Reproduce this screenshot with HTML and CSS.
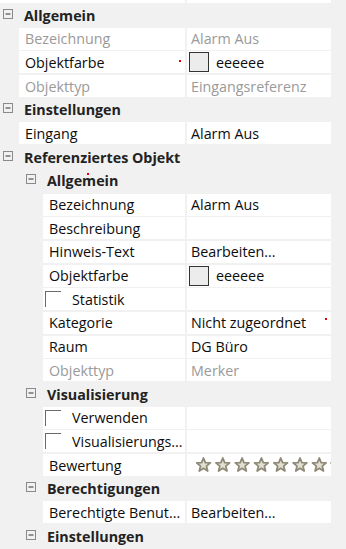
FILE: index.html
```html
<!DOCTYPE html>
<html lang="de">
<head>
<meta charset="utf-8">
<title>Eigenschaften</title>
<link rel="stylesheet" href="styles.css">
</head>
<body>
<div class="grid">
  <div class="stub"><div class="stub-l"></div><div class="stub-r"></div></div>

  <div class="row cat l0"><svg class="tog" width="10" height="10" viewBox="0 0 10 10"><rect x="0.5" y="0.5" width="9" height="9" fill="none" stroke="#8a8a8a"/><path d="M2.5 5h5" stroke="#333"/></svg><span class="cat-name">Allgemein</span></div>
  <div class="row prop l0"><div class="name dis">Bezeichnung</div><div class="val dis">Alarm Aus</div></div>
  <div class="row prop l0"><div class="name">Objektfarbe</div><div class="val swv"><span class="swatch"></span>eeeeee</div><span class="dot d1"></span></div>
  <div class="row prop l0"><div class="name dis">Objekttyp</div><div class="val dis">Eingangsreferenz</div></div>

  <div class="row cat l0"><svg class="tog" width="10" height="10" viewBox="0 0 10 10"><rect x="0.5" y="0.5" width="9" height="9" fill="none" stroke="#8a8a8a"/><path d="M2.5 5h5" stroke="#333"/></svg><span class="cat-name">Einstellungen</span></div>
  <div class="row prop l0"><div class="name">Eingang</div><div class="val">Alarm Aus</div></div>

  <div class="row cat l0"><svg class="tog" width="10" height="10" viewBox="0 0 10 10"><rect x="0.5" y="0.5" width="9" height="9" fill="none" stroke="#8a8a8a"/><path d="M2.5 5h5" stroke="#333"/></svg><span class="cat-name">Referenziertes Objekt</span></div>

  <div class="row cat l1"><svg class="tog" width="10" height="10" viewBox="0 0 10 10"><rect x="0.5" y="0.5" width="9" height="9" fill="none" stroke="#8a8a8a"/><path d="M2.5 5h5" stroke="#333"/></svg><span class="cat-name">Allgemein</span><span class="dot d2"></span></div>
  <div class="row prop l1"><div class="name">Bezeichnung</div><div class="val">Alarm Aus</div></div>
  <div class="row prop l1"><div class="name">Beschreibung</div><div class="val"></div></div>
  <div class="row prop l1"><div class="name">Hinweis-Text</div><div class="val">Bearbeiten...</div></div>
  <div class="row prop l1"><div class="name">Objektfarbe</div><div class="val swv"><span class="swatch"></span>eeeeee</div></div>
  <div class="row prop l1"><div class="name chk"><span class="box"></span>Statistik</div><div class="val"></div></div>
  <div class="row prop l1"><div class="name">Kategorie</div><div class="val">Nicht zugeordnet</div><span class="dot d3"></span></div>
  <div class="row prop l1"><div class="name">Raum</div><div class="val">DG Büro</div></div>
  <div class="row prop l1"><div class="name dis">Objekttyp</div><div class="val dis">Merker</div></div>

  <div class="row cat l1"><svg class="tog" width="10" height="10" viewBox="0 0 10 10"><rect x="0.5" y="0.5" width="9" height="9" fill="none" stroke="#8a8a8a"/><path d="M2.5 5h5" stroke="#333"/></svg><span class="cat-name">Visualisierung</span></div>
  <div class="row prop l1"><div class="name chk"><span class="box"></span>Verwenden</div><div class="val"></div></div>
  <div class="row prop l1"><div class="name chk"><span class="box"></span>Visualisierungs...</div><div class="val"></div></div>
  <div class="row prop l1"><div class="name">Bewertung</div><div class="val stars">
    <svg width="150" height="16" viewBox="0 0 150 16">
      <defs><polygon id="st" points="7.5,1 9.4,5.6 14.3,5.9 10.5,9.1 11.7,14 7.5,11.3 3.3,14 4.5,9.1 0.7,5.9 5.6,5.6"/></defs>
      <use href="#st" x="0" class="star"/>
      <use href="#st" x="19.3" class="star"/>
      <use href="#st" x="38.6" class="star"/>
      <use href="#st" x="57.9" class="star"/>
      <use href="#st" x="77.2" class="star"/>
      <use href="#st" x="96.5" class="star"/>
      <use href="#st" x="115.8" class="star"/>
      <use href="#st" x="134.4" class="star"/>
    </svg>
  </div></div>

  <div class="row cat l1"><svg class="tog" width="10" height="10" viewBox="0 0 10 10"><rect x="0.5" y="0.5" width="9" height="9" fill="none" stroke="#8a8a8a"/><path d="M2.5 5h5" stroke="#333"/></svg><span class="cat-name">Berechtigungen</span></div>
  <div class="row prop l1"><div class="name">Berechtigte Benut...</div><div class="val">Bearbeiten...</div></div>

  <div class="row cat l1"><svg class="tog" width="10" height="10" viewBox="0 0 10 10"><rect x="0.5" y="0.5" width="9" height="9" fill="none" stroke="#8a8a8a"/><path d="M2.5 5h5" stroke="#333"/></svg><span class="cat-name">Einstellungen</span></div>
</div>
</body>
</html>
```

FILE: styles.css
```css
html, body {
  margin: 0;
  padding: 0;
  background: #f1f1f1;
  overflow: hidden;
}
body {
  font-family: "Open Sans", "Noto Sans", sans-serif;
  font-size: 14.3px;
  color: #0d0d0d;
}
.grid {
  width: 331px;
  display: flex;
  flex-direction: column;
}
.stub {
  display: flex;
  gap: 2px;
  height: 3px;
  margin-bottom: 1px;
}
.stub-l {
  flex: 1;
  background: #fff;
}
.stub-r {
  width: 144px;
  background: #fff;
}
.row {
  position: relative;
  height: 22px;
  margin-bottom: 1.7px;
  display: flex;
  align-items: center;
  flex: none;
}
.cat.l0 { padding-left: 3px; }
.cat.l1 { padding-left: 26px; }
.tog {
  flex: none;
  margin-right: 11px;
  margin-bottom: 3px;
}
.cat-name {
  font-weight: 700;
  color: #222;
  white-space: nowrap;
}
.prop {
  align-items: stretch;
  gap: 2px;
}
.prop.l0 { padding-left: 19px; }
.prop.l1 { padding-left: 43px; }
.name {
  flex: 1;
  min-width: 0;
  background: #fff;
  padding-left: 6px;
  display: flex;
  align-items: center;
  white-space: nowrap;
  overflow: hidden;
}
.val {
  width: 144px;
  flex: none;
  background: #fff;
  padding-left: 4px;
  box-sizing: border-box;
  display: flex;
  align-items: center;
  white-space: nowrap;
  overflow: hidden;
}
.dis { color: #9a9a9a; }
.swv { padding-left: 2px; }
.swatch {
  width: 20px;
  height: 20px;
  box-sizing: border-box;
  border: 1px solid #333;
  background: #ececec;
  margin-right: 7px;
  flex: none;
}
.chk { padding-left: 2px; }
.box {
  width: 16px;
  height: 16px;
  box-sizing: border-box;
  border-top: 1px solid #6a6a6a;
  border-left: 1px solid #6a6a6a;
  margin-right: 11px;
  flex: none;
}
.stars { padding-left: 9px; }
.stars svg { flex: none; }
.star {
  fill: #e2ded2;
  stroke: #8f8a77;
  stroke-width: 1.8;
  stroke-linejoin: round;
}
.dot {
  position: absolute;
  width: 2px;
  height: 2px;
  background: #e00000;
}
.d1 { left: 179px; top: 9px; }
.d2 { left: 87px; top: 3px; }
.d3 { left: 325px; top: 6px; }
```
